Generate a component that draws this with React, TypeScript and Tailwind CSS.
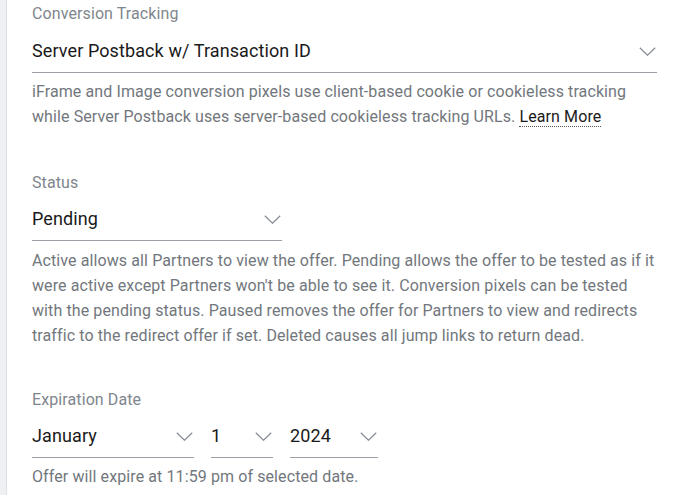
import React from "react";

const Chevron = () => (
  <svg width="17" height="9" viewBox="0 0 17 9" fill="none" className="shrink-0">
    <path d="M0.8 0.8l7.7 7.4 7.7-7.4" stroke="#8a8f96" strokeWidth="1.3" />
  </svg>
);

function Select({ value, className }: { value: string; className: string }) {
  return (
    <div className={`flex items-center justify-between border-b border-[#9ca1a8] h-[43px] pr-[1px] ${className}`}>
      <span className="text-[18px] text-[#1a1a1a] leading-none tracking-[0.1px]">{value}</span>
      <Chevron />
    </div>
  );
}

export default function App() {
  return (
    <div className="flex w-[698px] h-[495px] bg-white overflow-hidden tracking-[0.1px]" style={{ fontFamily: "Roboto, sans-serif" }}>
      <div className="w-[7px] bg-[#eef0f3] border-r border-[#dde0e5] shrink-0" />
      <div className="pl-[25px] w-[650px] pt-[4px]">
        <div className="text-[16px] text-[#80868d] leading-[20px]">Conversion Tracking</div>
        <Select value="Server Postback w/ Transaction ID" className="w-[625px] mt-[6px]" />
        <p className="text-[16px] text-[#72777d] leading-[25px] mt-[6px]">
          iFrame and Image conversion pixels use client-based cookie or cookieless tracking while Server Postback uses server-based cookieless tracking URLs.{" "}
          <span className="text-[#1a1a1a] border-b border-dotted border-[#555]">Learn More</span>
        </p>

        <div className="text-[16px] text-[#80868d] leading-[20px] mt-[44px]">Status</div>
        <Select value="Pending" className="w-[250px] mt-[5px]" />
        <p className="text-[16px] text-[#72777d] leading-[25px] mt-[7px] w-[627px]">
          Active allows all Partners to view the offer. Pending allows the offer to be tested as if it were active except Partners won't be able to see it. Conversion pixels can be tested with the pending status. Paused removes the offer for Partners to view and redirects traffic to the redirect offer if set. Deleted causes all jump links to return dead.
        </p>

        <div className="text-[16px] text-[#80868d] leading-[20px] mt-[42px]">Expiration Date</div>
        <div className="flex gap-[17px] mt-[5px]">
          <Select value="January" className="w-[162px]" />
          <Select value="1" className="w-[62px]" />
          <Select value="2024" className="w-[88px]" />
        </div>
        <p className="text-[16px] text-[#72777d] leading-[25px] mt-[6px]">Offer will expire at 11:59 pm of selected date.</p>
      </div>
    </div>
  );
}
